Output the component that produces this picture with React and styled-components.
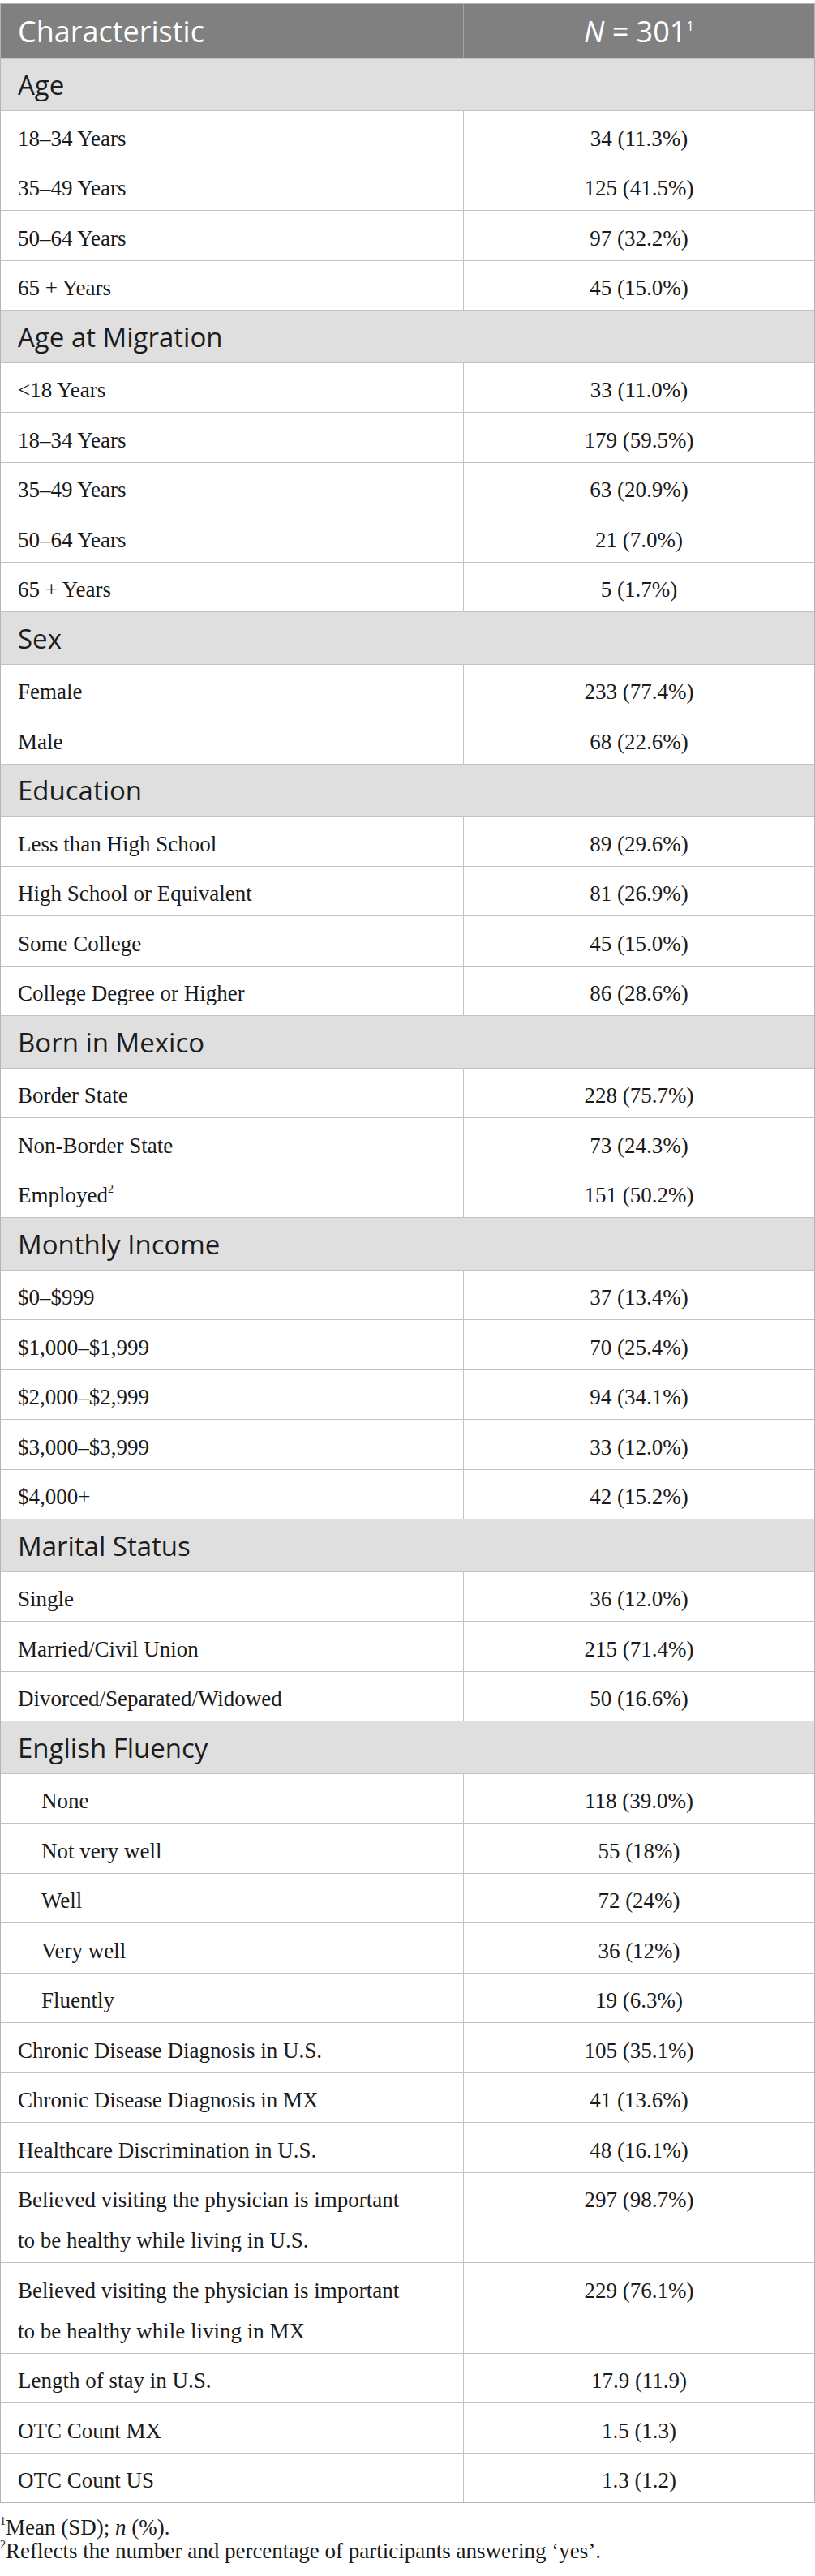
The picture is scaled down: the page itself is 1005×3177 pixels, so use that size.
import React from 'react';
import styled, { createGlobalStyle } from 'styled-components';

const GlobalStyle = createGlobalStyle`
  html, body {
    margin: 0;
    padding: 0;
    background: #ffffff;
  }
`;

const Page = styled.div`
  width: 1005px;
  padding-top: 4px;
  box-sizing: border-box;
`;

const Table = styled.div`
  width: 1005px;
  box-sizing: border-box;
  border: 1px solid #b4b4b4;
`;

const HeadRow = styled.div`
  display: grid;
  grid-template-columns: 571px 1fr;
  background: #7f807f;
  color: #ffffff;
  font-family: 'Open Sans', 'Liberation Sans', sans-serif;
  font-size: 36px;
  line-height: 50px;
  height: 67px;
  box-sizing: border-box;
`;

const HeadCell = styled.div`
  padding: 9.3px 0 7.7px ${(p) => (p.$center ? 0 : 21)}px;
  text-align: ${(p) => (p.$center ? 'center' : 'left')};
  border-right: ${(p) => (p.$center ? 'none' : '1px solid #a3a3a3')};
  box-sizing: border-box;
  white-space: nowrap;

  sup {
    font-size: 17px;
    line-height: 0;
    vertical-align: 14px;
  }
`;

const SectionRow = styled.div`
  border-top: 1px solid #c3c3c3;
  background: #e0dfe0;
  color: #1c1c1c;
  font-family: 'Open Sans', 'Liberation Sans', sans-serif;
  font-size: 33px;
  line-height: 50px;
  padding: 7.2px 0 6.3px 21px;
`;

const Row = styled.div`
  display: grid;
  grid-template-columns: 571px 1fr;
  border-top: 1px solid #c3c3c3;
  font-family: 'Liberation Serif', 'Times New Roman', serif;
  font-size: 27px;
  line-height: 50px;
  color: #1a1a1a;
`;

const Label = styled.div`
  padding: 8.5px 60px 2px ${(p) => (p.$indent ? 50 : 21)}px;
  border-right: 1px solid #c3c3c3;
  box-sizing: border-box;

  sup {
    font-size: 14px;
    line-height: 0;
    vertical-align: 12px;
  }
`;

const Value = styled.div`
  padding: 8.5px 0 2px;
  text-align: center;
`;

const Notes = styled.div`
  margin-top: 16px;
  font-family: 'Liberation Serif', 'Times New Roman', serif;
  font-size: 27px;
  line-height: 29px;
  color: #1a1a1a;

  p {
    margin: 0;
  }

  sup {
    font-size: 14px;
    line-height: 0;
    vertical-align: 12px;
  }
`;

const sections = [
  {
    title: 'Age',
    rows: [
      ['18–34 Years', '34 (11.3%)'],
      ['35–49 Years', '125 (41.5%)'],
      ['50–64 Years', '97 (32.2%)'],
      ['65 + Years', '45 (15.0%)'],
    ],
  },
  {
    title: 'Age at Migration',
    rows: [
      ['<18 Years', '33 (11.0%)'],
      ['18–34 Years', '179 (59.5%)'],
      ['35–49 Years', '63 (20.9%)'],
      ['50–64 Years', '21 (7.0%)'],
      ['65 + Years', '5 (1.7%)'],
    ],
  },
  {
    title: 'Sex',
    rows: [
      ['Female', '233 (77.4%)'],
      ['Male', '68 (22.6%)'],
    ],
  },
  {
    title: 'Education',
    rows: [
      ['Less than High School', '89 (29.6%)'],
      ['High School or Equivalent', '81 (26.9%)'],
      ['Some College', '45 (15.0%)'],
      ['College Degree or Higher', '86 (28.6%)'],
    ],
  },
  {
    title: 'Born in Mexico',
    rows: [
      ['Border State', '228 (75.7%)'],
      ['Non-Border State', '73 (24.3%)'],
      ['Employed', '151 (50.2%)', '', '2'],
    ],
  },
  {
    title: 'Monthly Income',
    rows: [
      ['$0–$999', '37 (13.4%)'],
      ['$1,000–$1,999', '70 (25.4%)'],
      ['$2,000–$2,999', '94 (34.1%)'],
      ['$3,000–$3,999', '33 (12.0%)'],
      ['$4,000+', '42 (15.2%)'],
    ],
  },
  {
    title: 'Marital Status',
    rows: [
      ['Single', '36 (12.0%)'],
      ['Married/Civil Union', '215 (71.4%)'],
      ['Divorced/Separated/Widowed', '50 (16.6%)'],
    ],
  },
  {
    title: 'English Fluency',
    rows: [
      ['None', '118 (39.0%)', 'indent'],
      ['Not very well', '55 (18%)', 'indent'],
      ['Well', '72 (24%)', 'indent'],
      ['Very well', '36 (12%)', 'indent'],
      ['Fluently', '19 (6.3%)', 'indent'],
      ['Chronic Disease Diagnosis in U.S.', '105 (35.1%)'],
      ['Chronic Disease Diagnosis in MX', '41 (13.6%)'],
      ['Healthcare Discrimination in U.S.', '48 (16.1%)'],
      ['Believed visiting the physician is important to be healthy while living in U.S.', '297 (98.7%)'],
      ['Believed visiting the physician is important to be healthy while living in MX', '229 (76.1%)'],
      ['Length of stay in U.S.', '17.9 (11.9)'],
      ['OTC Count MX', '1.5 (1.3)'],
      ['OTC Count US', '1.3 (1.2)'],
    ],
  },
];

export default function App() {
  return (
    <Page>
      <GlobalStyle />
      <Table>
        <HeadRow>
          <HeadCell>Characteristic</HeadCell>
          <HeadCell $center>
            <i>N</i> = 301<sup>1</sup>
          </HeadCell>
        </HeadRow>
        {sections.map((section) => (
          <div key={section.title}>
            <SectionRow>{section.title}</SectionRow>
            {section.rows.map((r, i) => (
              <Row key={i}>
                <Label $indent={r[2] === 'indent'}>
                  {r[0]}
                  {r[3] ? <sup>{r[3]}</sup> : null}
                </Label>
                <Value>{r[1]}</Value>
              </Row>
            ))}
          </div>
        ))}
      </Table>
      <Notes>
        <p>
          <sup>1</sup>Mean (SD); <i>n</i> (%).
        </p>
        <p>
          <sup>2</sup>Reflects the number and percentage of participants answering ‘yes’.
        </p>
      </Notes>
    </Page>
  );
}
